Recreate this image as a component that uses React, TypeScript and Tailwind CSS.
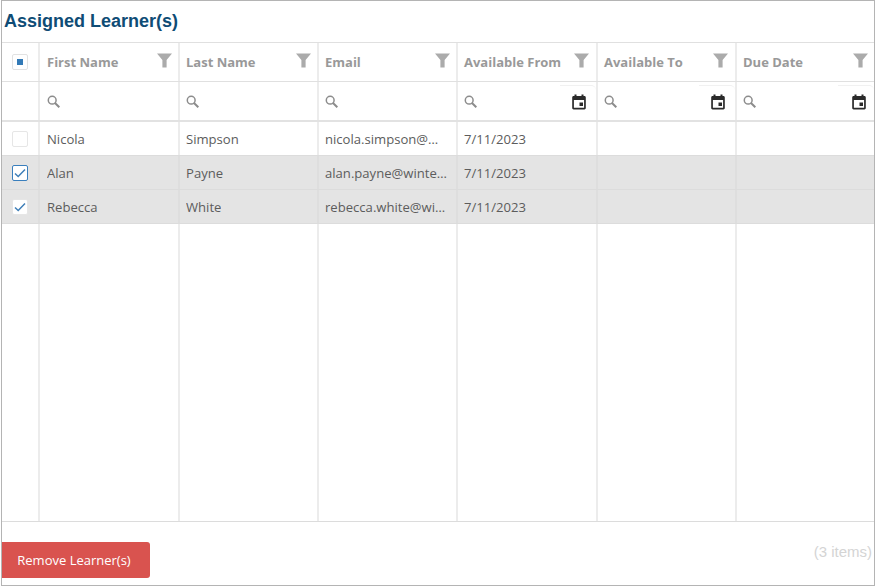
import React from 'react';

type Learner = { first: string; last: string; email: string; from: string; checked: boolean; focused?: boolean };

const learners: Learner[] = [
  { first: 'Nicola', last: 'Simpson', email: 'nicola.simpson@winterhill.com', from: '7/11/2023', checked: false },
  { first: 'Alan', last: 'Payne', email: 'alan.payne@winterhill.com', from: '7/11/2023', checked: true, focused: true },
  { first: 'Rebecca', last: 'White', email: 'rebecca.white@winterhill.com', from: '7/11/2023', checked: true },
];

const columns = [
  { title: 'First Name', date: false },
  { title: 'Last Name', date: false },
  { title: 'Email', date: false },
  { title: 'Available From', date: true },
  { title: 'Available To', date: true },
  { title: 'Due Date', date: true },
];

const gridCols = 'grid grid-cols-[38px_140px_139px_139px_140px_139px_1fr]';

const FilterIcon = () => (
  <svg width="15" height="15" viewBox="0 0 15 15" className="text-[#ababab] shrink-0">
    <path d="M0 0.500h15L9.600 7v7.500H5.400V7z" fill="currentColor" />
  </svg>
);

const SearchIcon = () => (
  <svg width="13" height="13" viewBox="0 0 13 13" fill="none" stroke="#8c8c8c" strokeWidth="1.500" className="shrink-0">
    <circle cx="5.200" cy="5.200" r="3.900" />
    <path d="M8 8l4.300 4.300" strokeWidth="2" />
  </svg>
);

const CalendarIcon = () => (
  <svg width="16" height="16" viewBox="0 0 16 16" className="shrink-0">
    <path
      d="M3.500 0.500h2v1.500h5V0.500h2V2h.9c.8 0 1.400.6 1.400 1.400v10.700c0 .8-.6 1.400-1.400 1.400H2.600c-.8 0-1.400-.6-1.400-1.400V3.400c0-.8.6-1.400 1.400-1.400h.9zM2.900 6v7.800h10.200V6z"
      fill="#2b2b2b"
    />
    <rect x="8.500" y="8.500" width="3.500" height="3.500" fill="#2b2b2b" />
  </svg>
);

const Check = () => (
  <svg width="12" height="10" viewBox="0 0 12 10" fill="none" stroke="#3f7fb8" strokeWidth="1.500">
    <path d="M1 5.500L4.200 8.500L11 1.500" />
  </svg>
);

const RowCheckbox: React.FC<{ checked: boolean; focused?: boolean }> = ({ checked, focused }) => (
  <div
    className={`w-[16px] h-[16px] rounded-[2px] bg-white border flex items-center justify-center ${
      focused ? 'border-[#3a7fbd]' : 'border-[#e6e6e6]'
    }`}
  >
    {checked && <Check />}
  </div>
);

export default function App() {
  return (
    <div className="w-[876px] h-[587px] bg-white pl-[1px] font-['Open_Sans','Noto_Sans',sans-serif]">
      <div className="w-[874px] h-[586px] border border-[#b4b4b4] flex flex-col">
        <h2 className="h-[41px] shrink-0 pl-[2px] pt-[9px] text-[18px] leading-[22px] font-bold text-[#0f4c75] font-['Liberation_Sans',sans-serif]">
          Assigned Learner(s)
        </h2>

        {/* header row */}
        <div className={`${gridCols} h-[39px] shrink-0 border-t border-[#e0e0e0]`}>
          <div className="border-r-2 border-[#ececec] flex items-center justify-center">
            <div className="w-[16px] h-[16px] rounded-[2px] bg-white border border-[#e2e2e2] flex items-center justify-center">
              <div className="w-[6px] h-[6px] bg-[#337ab7]" />
            </div>
          </div>
          {columns.map((c, i) => (
            <div
              key={c.title}
              className={`flex items-start justify-between ${i === 0 ? 'pl-[7px]' : 'pl-[6px]'} ${c.date && i < 5 ? 'pr-[7px]' : 'pr-[6px]'} ${i < 5 ? 'border-r-2 border-[#ececec]' : ''}`}
            >
              <span className="text-[13px] leading-[38px] font-bold text-[#999999] whitespace-nowrap">{c.title}</span>
              <div className="pt-[10px]">
                <FilterIcon />
              </div>
            </div>
          ))}
        </div>

        {/* filter row */}
        <div className={`${gridCols} h-[41px] shrink-0 border-t border-[#e0e0e0] border-b-2 border-b-[#e2e2e2]`}>
          <div className="border-r-2 border-[#ececec]" />
          {columns.map((c, i) => (
            <div
              key={c.title}
              className={`flex items-center justify-between ${i === 0 ? 'pl-[7px]' : 'pl-[6px]'} ${i < 5 ? 'border-r-2 border-[#ececec]' : ''}`}
            >
              <SearchIcon />
              {c.date && (
                <div className={`w-[36px] self-stretch my-[3px] rounded-tr-[5px] border-t border-[#f1f1f1] flex items-center justify-end ${i < 5 ? 'pr-[9px]' : 'pr-[7px]'}`}>
                  <CalendarIcon />
                </div>
              )}
            </div>
          ))}
        </div>

        {/* rows */}
        <div className="flex-1 flex flex-col min-h-0">
          {learners.map((l) => (
            <div key={l.first} className={`${gridCols} h-[34px] shrink-0 text-[13.100px] text-[#5c5c5c] border-b border-[#dcdcdc] ${l.checked ? 'bg-[#e4e4e4]' : ''}`}>
              <div className={`flex items-center justify-center border-r-2 ${l.checked ? 'border-[#dedede]' : 'border-[#ececec]'}`}>
                <RowCheckbox checked={l.checked} focused={l.focused} />
              </div>
              {[l.first, l.last, l.email, l.from, '', ''].map((v, i) => (
                <div
                  key={i}
                  className={`flex items-center ${i === 0 ? 'pl-[7px]' : 'pl-[6px]'} ${i === 2 ? 'pr-[8px]' : 'pr-[7px]'} pt-[2px] min-w-0 ${i < 5 ? `border-r-2 ${l.checked ? 'border-[#dedede]' : 'border-[#ececec]'}` : ''}`}
                >
                  <span className="truncate">{v}</span>
                </div>
              ))}
            </div>
          ))}
          <div className={`${gridCols} flex-1`}>
            {[0, 1, 2, 3, 4, 5].map((i) => (
              <div key={i} className="border-r-2 border-[#ececec]" />
            ))}
            <div />
          </div>
        </div>

        {/* footer */}
        <div className="h-[64px] shrink-0 border-t border-[#dcdcdc] flex items-start justify-between">
          <button className="mt-[20px] w-[148px] h-[36px] pt-[1px] pr-[4px] bg-[#d9534f] rounded-r-[3px] text-white text-[13px]">
            Remove Learner(s)
          </button>
          <span className="mt-[20px] pr-[2px] text-[15px] leading-[20px] text-[#d4d4d4] font-['Liberation_Sans',sans-serif]">(3 items)</span>
        </div>
      </div>
    </div>
  );
}
